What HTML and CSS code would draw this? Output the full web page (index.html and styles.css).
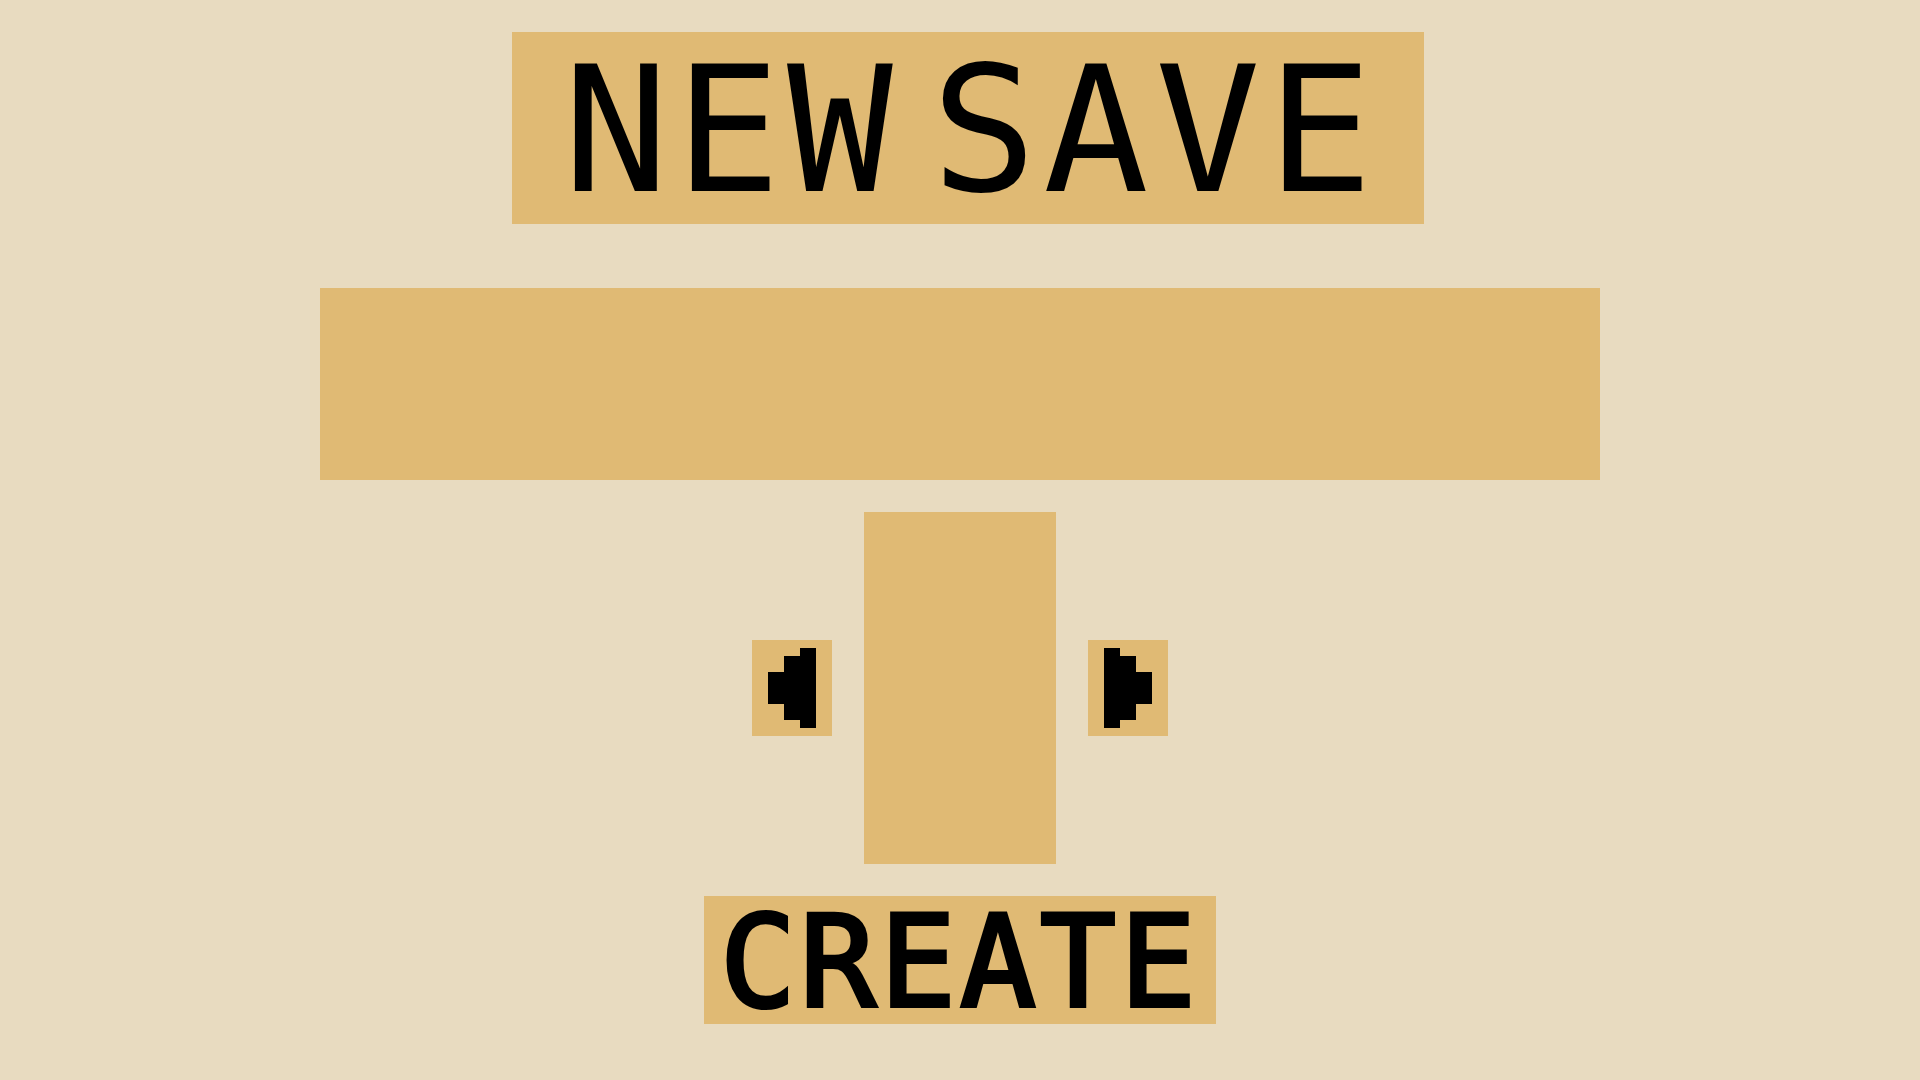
FILE: index.html
```html
<!DOCTYPE html>
<html lang="en">
<head>
<meta charset="utf-8">
<title>New Save</title>
<link rel="stylesheet" href="styles.css">
</head>
<body>
<main class="screen">
  <h1 class="title"><span class="title-text">NEW SAVE</span></h1>
  <div class="name-field" aria-label="Save name"></div>
  <div class="picker">
    <button class="arrow-btn" aria-label="Previous">
      <svg width="48" height="80" viewBox="0 0 48 80" aria-hidden="true">
        <rect x="32" y="0" width="16" height="80" fill="#000"/>
        <rect x="16" y="8" width="16" height="64" fill="#000"/>
        <rect x="0" y="24" width="16" height="32" fill="#000"/>
      </svg>
    </button>
    <div class="preview"></div>
    <button class="arrow-btn" aria-label="Next">
      <svg width="48" height="80" viewBox="0 0 48 80" aria-hidden="true">
        <rect x="0" y="0" width="16" height="80" fill="#000"/>
        <rect x="16" y="8" width="16" height="64" fill="#000"/>
        <rect x="32" y="24" width="16" height="32" fill="#000"/>
      </svg>
    </button>
  </div>
  <button class="create-btn"><span class="create-text">CREATE</span></button>
</main>
</body>
</html>
```
FILE: styles.css
```css
html, body {
  margin: 0;
  padding: 0;
}
body {
  background: #e8dbc0;
  width: 1920px;
  height: 1080px;
  overflow: hidden;
  font-family: "DejaVu Sans Mono", "Liberation Mono", monospace;
  color: #000;
}
.screen {
  display: flex;
  flex-direction: column;
  align-items: center;
  padding-top: 32px;
}
.title {
  margin: 0 0 0 16px;
  box-sizing: border-box;
  width: 912px;
  height: 192px;
  padding-top: 6px;
  padding-left: 6px;
  background: #e0ba74;
  display: flex;
  align-items: center;
  justify-content: center;
  font-weight: normal;
}
.title-text {
  font-size: 175.6px;
  line-height: 1;
  letter-spacing: 6.3px;
  word-spacing: -80px;
  white-space: nowrap;
}
.name-field {
  margin-top: 64px;
  width: 1280px;
  height: 192px;
  background: #e0ba74;
}
.picker {
  margin-top: 32px;
  display: flex;
  align-items: center;
  gap: 32px;
}
.preview {
  width: 192px;
  height: 352px;
  background: #e0ba74;
}
.arrow-btn {
  box-sizing: border-box;
  width: 80px;
  height: 96px;
  padding: 8px 16px;
  margin: 0;
  border: 0;
  background: #e0ba74;
  display: flex;
  align-items: center;
  justify-content: center;
  cursor: pointer;
}
.arrow-btn svg {
  display: block;
}
.create-btn {
  margin-top: 32px;
  box-sizing: border-box;
  width: 512px;
  height: 128px;
  padding: 5px 0 0 0;
  border: 0;
  background: #e0ba74;
  display: flex;
  align-items: center;
  justify-content: center;
  font-family: "DejaVu Sans Mono", "Liberation Mono", monospace;
  color: #000;
  cursor: pointer;
}
.create-text {
  font-size: 126px;
  line-height: 1;
  letter-spacing: 4.1px;
  -webkit-text-stroke: 4px #000;
  white-space: nowrap;
}
```
